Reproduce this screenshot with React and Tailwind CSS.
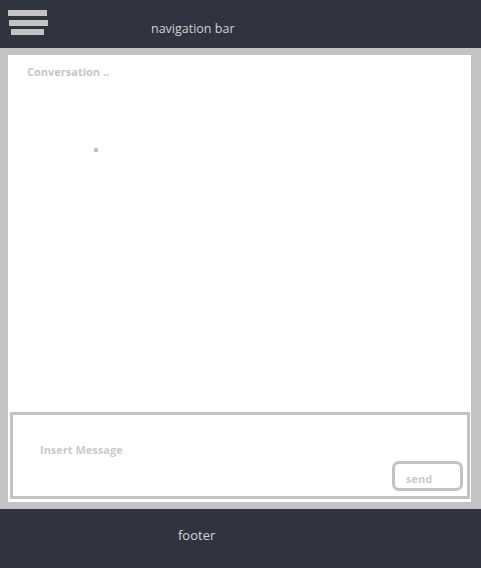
import React from "react";

const font = { fontFamily: '"Open Sans", "Liberation Sans", sans-serif' };

const App = () => {
  return (
    <div className="flex h-[568px] w-[481px] flex-col bg-[#c3c3c3]" style={font}>
      {/* navigation */}
      <nav className="flex h-[48px] shrink-0 bg-[#30343e]">
        <div className="flex flex-col pt-[10px] pl-[8px]">
          <span className="h-[6px] w-[39px] bg-[#c3c3c3]" />
          <span className="mt-[4px] ml-[1px] h-[6px] w-[39px] bg-[#c3c3c3]" />
          <span className="mt-[3px] ml-[3px] h-[6px] w-[33px] bg-[#c3c3c3]" />
        </div>
        <span className="ml-[103px] pt-[20px] text-[12.5px] leading-[18px] text-[#cfd0d2]">
          navigation bar
        </span>
      </nav>

      {/* conversation panel */}
      <main className="flex flex-1 flex-col pt-[7px] pr-[10px] pb-[7px] pl-[8px]">
        <div className="flex flex-1 flex-col bg-white pr-[1px] pb-[3px] pl-[2px]">
          <div className="flex-1">
            <p className="pt-[9px] pl-[17px] text-[11px] font-bold leading-[15px] text-[#c6c6c6]">
              Conversation ..
            </p>
            <div className="mt-[69px] ml-[84px] h-[4px] w-[4px] bg-[#c3c3c3]" />
          </div>

          <div className="flex h-[87px] flex-col border-[3px] border-[#c3c3c3]">
            <p className="pt-[27px] pl-[27px] text-[11px] font-bold leading-[15px] text-[#cbcbcb]">
              Insert Message
            </p>
            <button className="mt-[4px] mr-[4px] mb-[5px] flex h-[30px] w-[71px] items-center self-end rounded-[7px] border-[3px] border-[#c3c3c3] pt-[4px] pl-[11px] text-[11px] font-bold leading-[15px] text-[#cbcbcb]">
              send
            </button>
          </div>
        </div>
      </main>

      {/* footer */}
      <footer className="h-[59px] shrink-0 bg-[#30343e] pt-[13px] pl-[178px]">
        <span className="text-[13px] leading-[18px] text-[#d3d4d6]">footer</span>
      </footer>
    </div>
  );
};

export default App;
